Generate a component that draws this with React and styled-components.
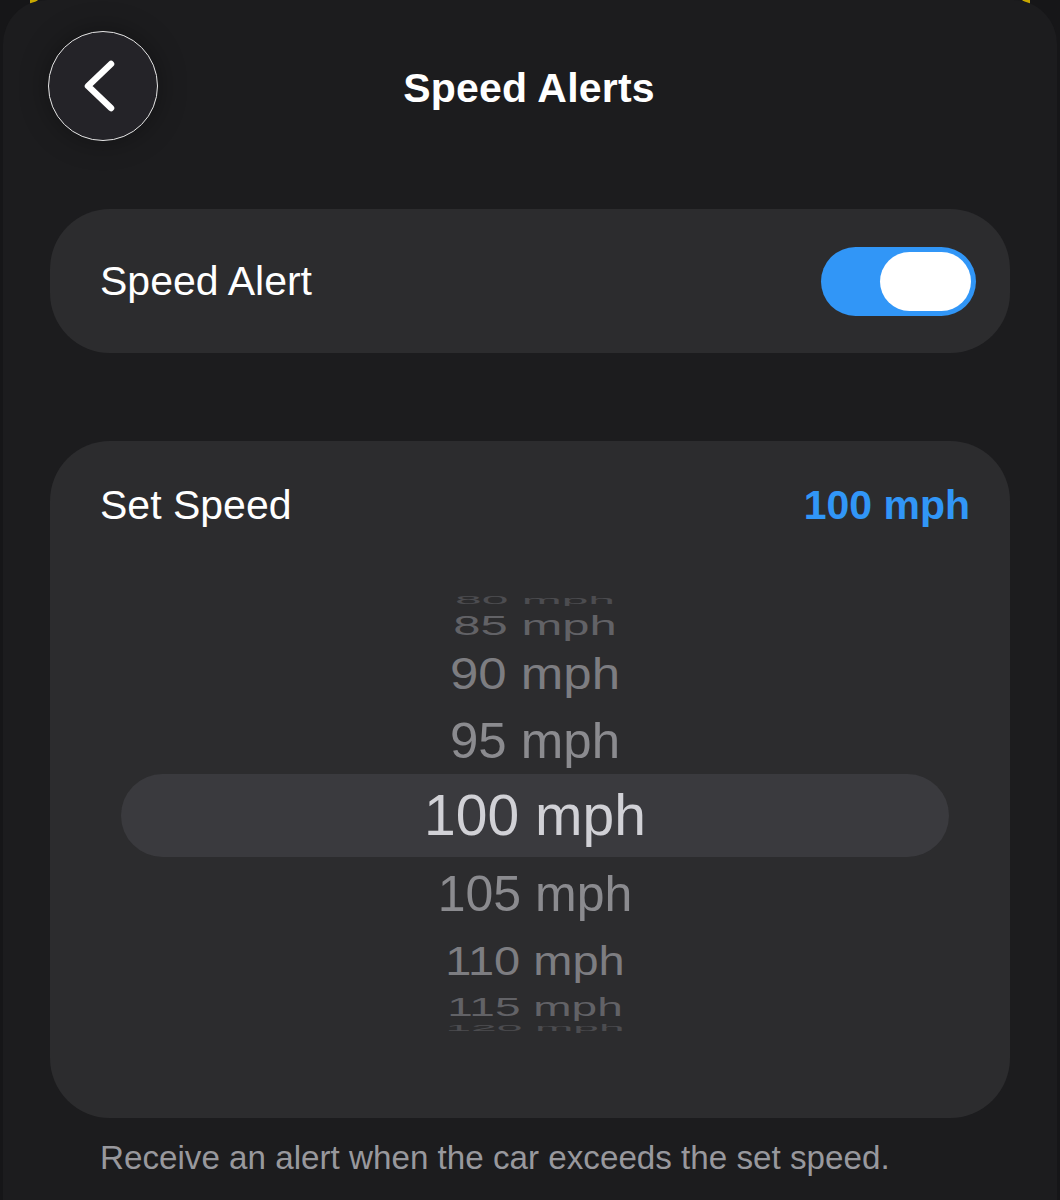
import React from "react";
import styled, { createGlobalStyle } from "styled-components";

const Global = createGlobalStyle`
  html, body { margin: 0; padding: 0; background: #161618; }
  body { font-family: "Liberation Sans", Arial, sans-serif; -webkit-font-smoothing: antialiased; }
`;

const Page = styled.div`
  position: relative;
  width: 1060px;
  height: 1200px;
  overflow: hidden;
  background: #161618;
`;

const Corner = styled.div`
  position: absolute;
  top: 0;
  ${(p) => (p.$side === "left" ? "left: 30px;" : "right: 30px;")}
  width: 8px;
  height: 7px;
  background: #c9a800;
  clip-path: ${(p) =>
    p.$side === "left"
      ? "polygon(0 0, 100% 0, 0 100%)"
      : "polygon(0 0, 100% 0, 100% 100%)"};
`;

const Sheet = styled.div`
  position: relative;
  margin: 0 3px;
  height: 1200px;
  background: #1c1c1e;
  border-radius: 44px 44px 0 0;
  display: flex;
  flex-direction: column;
  padding: 31px 47px 0 47px;
  box-sizing: border-box;
`;

const Header = styled.div`
  display: grid;
  grid-template-columns: 110px 1fr 110px;
  align-items: center;
  height: 110px;
  margin-left: -2px;
`;

const BackButton = styled.button`
  width: 110px;
  height: 110px;
  border-radius: 50%;
  border: 1.5px solid #e6e6e6;
  background: #242328;
  box-shadow: 0 0 28px rgba(0, 0, 0, 0.35);
  display: flex;
  align-items: center;
  justify-content: center;
  padding: 0;
  cursor: pointer;
`;

const Title = styled.h1`
  margin: 4px 0 0 0;
  text-align: center;
  font-size: 41px;
  font-weight: 700;
  color: #ffffff;
  letter-spacing: 0.2px;
`;

const Card = styled.div`
  background: #2c2c2e;
  border-radius: ${(p) => p.$radius}px;
  margin-top: ${(p) => p.$top}px;
`;

const ToggleRow = styled.div`
  height: 144px;
  display: flex;
  align-items: center;
  justify-content: space-between;
  padding: 0 34px 0 50px;
`;

const Label = styled.span`
  font-size: 41px;
  color: #ffffff;
  font-weight: 400;
`;

const Toggle = styled.div`
  width: 155px;
  height: 69px;
  border-radius: 35px;
  background: #3196f7;
  display: flex;
  align-items: center;
  justify-content: flex-end;
  padding: 0 5px;
  box-sizing: border-box;
`;

const Knob = styled.div`
  width: 91px;
  height: 59px;
  border-radius: 30px;
  background: #ffffff;
`;

const SpeedCard = styled(Card)`
  padding: 40px 40px 87px 50px;
  height: 677px;
  box-sizing: border-box;
`;

const SpeedHeader = styled.div`
  height: 48px;
  display: flex;
  align-items: center;
  justify-content: space-between;
`;

const Value = styled.span`
  font-size: 41px;
  font-weight: 700;
  color: #3196f7;
`;

const Picker = styled.div`
  margin: 59px 21px 0 21px;
  display: flex;
  flex-direction: column;
`;

const Row = styled.div`
  height: ${(p) => p.$h}px;
  display: flex;
  align-items: center;
  justify-content: center;
  overflow: visible;
  background: ${(p) => (p.$selected ? "#3a3a3e" : "transparent")};
  border-radius: ${(p) => (p.$selected ? "42px" : "0")};
`;

const RowText = styled.span`
  display: block;
  font-size: ${(p) => p.$size}px;
  line-height: 1;
  color: ${(p) => p.$color};
  transform: scaleY(${(p) => p.$sy});
  white-space: nowrap;
`;

const Footnote = styled.p`
  margin: 21px 0 0 50px;
  font-size: 33.2px;
  color: #98989d;
  letter-spacing: 0;
`;

const rows = [
  { label: "80 mph", h: 24, size: 48, sy: 0.22, color: "#4c4c50" },
  { label: "85 mph", h: 26, size: 49, sy: 0.55, color: "#626266" },
  { label: "90 mph", h: 70, size: 51, sy: 0.86, color: "#7d7d81" },
  { label: "95 mph", h: 66, size: 51, sy: 0.97, color: "#8b8b8f" },
  { label: "100 mph", h: 83, size: 57, sy: 1, color: "#d1d1d6", selected: true },
  { label: "105 mph", h: 74, size: 50, sy: 0.98, color: "#8b8b8f" },
  { label: "110 mph", h: 58, size: 47, sy: 0.86, color: "#7d7d81" },
  { label: "115 mph", h: 36, size: 46, sy: 0.55, color: "#626266" },
  { label: "120 mph", h: 6, size: 46, sy: 0.18, color: "#4c4c50" },
];

function Chevron() {
  return (
    <svg width="48" height="60" viewBox="0 0 48 60" fill="none">
      <path
        d="M32 8 L9 30 L32 52"
        stroke="#ffffff"
        strokeWidth="6.5"
        strokeLinecap="round"
        strokeLinejoin="round"
      />
    </svg>
  );
}

export default function App() {
  return (
    <>
      <Global />
      <Page>
        <Corner $side="left" />
        <Corner $side="right" />
        <Sheet>
          <Header>
            <BackButton aria-label="Back">
              <Chevron />
            </BackButton>
            <Title>Speed Alerts</Title>
            <div />
          </Header>

          <Card $radius={60} $top={68}>
            <ToggleRow>
              <Label>Speed Alert</Label>
              <Toggle>
                <Knob />
              </Toggle>
            </ToggleRow>
          </Card>

          <SpeedCard $radius={60} $top={88}>
            <SpeedHeader>
              <Label>Set Speed</Label>
              <Value>100 mph</Value>
            </SpeedHeader>
            <Picker>
              {rows.map((r) => (
                <Row key={r.label} $h={r.h} $selected={r.selected}>
                  <RowText $size={r.size} $color={r.color} $sy={r.sy}>
                    {r.label}
                  </RowText>
                </Row>
              ))}
            </Picker>
          </SpeedCard>

          <Footnote>Receive an alert when the car exceeds the set speed.</Footnote>
        </Sheet>
      </Page>
    </>
  );
}
